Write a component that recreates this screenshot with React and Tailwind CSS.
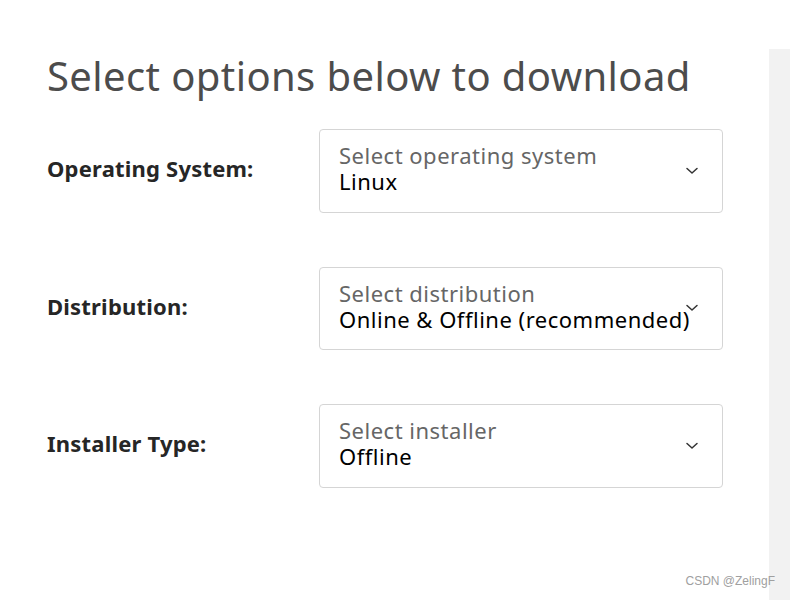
import { useState } from 'react'

const fields = [
  { label: 'Operating System:', placeholder: 'Select operating system', value: 'Linux' },
  { label: 'Distribution:', placeholder: 'Select distribution', value: 'Online & Offline (recommended)' },
  { label: 'Installer Type:', placeholder: 'Select installer', value: 'Offline' },
]

function Chevron() {
  return (
    <svg width="14" height="8" viewBox="0 0 14 8" fill="none" className="absolute right-[23px] top-1/2 -translate-y-1/2">
      <path d="M2 1.5 L7 6 L12 1.5" stroke="#333" strokeWidth="1.5" strokeLinecap="round" strokeLinejoin="round" />
    </svg>
  )
}

export default function App() {
  const [selected] = useState(fields)

  return (
    <div className="w-[790px] h-[600px] bg-white flex overflow-hidden" style={{ fontFamily: '"Noto Sans", "Open Sans", sans-serif' }}>
      <div className="flex-1 pl-[47px] pt-[50px] relative">
        <h1 className="text-[40px] leading-[52px] text-[#4c4c4c] font-normal tracking-[0.4px]">Select options below to download</h1>
        <div className="mt-[27px] flex flex-col gap-[54px]">
          {selected.map(f => (
            <div key={f.label} className="flex items-center">
              <div className="w-[272px] text-[22px] font-bold text-[#262626] tracking-[0.2px] -mt-[4px]">{f.label}</div>
              <div className="relative w-[404px] h-[83.5px] border border-[#d5d5d5] rounded-[4px] pl-[19px] pt-[12px]">
                <div className="text-[22px] leading-[26px] tracking-[0.5px] text-[#666] whitespace-nowrap">{f.placeholder}</div>
                <div className="text-[22px] leading-[26px] tracking-[0.5px] text-black whitespace-nowrap">{f.value}</div>
                <Chevron />
              </div>
            </div>
          ))}
        </div>
        <div className="absolute right-[-6px] bottom-[10px] text-[12px] text-[#a0a0a0]" style={{ fontFamily: '"Liberation Sans", sans-serif' }}>CSDN @ZelingF</div>
      </div>
      <div className="w-[21px] mt-[49px] bg-[#f2f2f2]"></div>
    </div>
  )
}
